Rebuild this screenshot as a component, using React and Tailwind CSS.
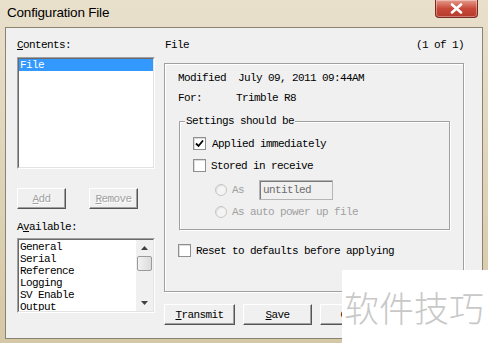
import React from "react";

const mono = "font-['Liberation_Mono',monospace] text-[11px] tracking-[-0.6px] leading-[12px]";

function Check({ checked }) {
  return (
    <span className="w-[13px] h-[13px] border border-[#8f8f8f] bg-white flex items-center justify-center shrink-0 shadow-[inset_1px_1px_0_#dcdcdc]">
      {checked && (
        <svg width="9" height="9" viewBox="0 0 9 9">
          <path d="M1 4.5 L3.5 7 L8 1.5" stroke="#000" strokeWidth="1.8" fill="none" />
        </svg>
      )}
    </span>
  );
}

function Radio() {
  return (
    <span className="w-[12px] h-[12px] rounded-full border border-[#c6c6c6] bg-[#f4f4f4] shrink-0 shadow-[inset_1px_1px_0_#e0e0e0]" />
  );
}

function Btn({ children, w, disabled }) {
  return (
    <div
      className={`${w} h-[21px] shrink-0 flex items-center justify-center border border-t-white border-l-white border-r-[#555] border-b-[#555] shadow-[inset_-1px_-1px_0_#a0a0a0] bg-[#f0f0f0] ${mono} ${disabled ? "text-[#a0a0a0] [text-shadow:1px_1px_0_#fff]" : "text-black"}`}
    >
      {children}
    </div>
  );
}

function Sunken({ className, children }) {
  return (
    <div className={`shrink-0 border border-t-[#a0a0a0] border-l-[#a0a0a0] border-r-white border-b-white ${className}`}>
      <div className="w-full h-full border border-t-[#696969] border-l-[#696969] border-r-[#e3e3e3] border-b-[#e3e3e3] bg-white overflow-hidden">
        {children}
      </div>
    </div>
  );
}

export default function App() {
  const available = ["General", "Serial", "Reference", "Logging", "SV Enable", "Output"];
  return (
    <div className="relative w-[488px] h-[343px] overflow-hidden bg-gradient-to-b from-[#e9e0cc] to-[#d5c8a6] flex flex-col">
      {/* Title bar */}
      <div className="h-[27px] shrink-0 flex items-start justify-between pl-[7px] pr-[10px]">
        <span className="mt-[3px] font-['Liberation_Sans',sans-serif] text-[13.5px] tracking-[-0.2px] text-black leading-[20px]">
          Configuration File
        </span>
        <div className="w-[43px] h-[18px] rounded-b-[4px] border border-t-0 border-[#7a2a20] bg-gradient-to-b from-[#e59a8c] via-[#c8493a] to-[#b53a2b] flex items-center justify-center shadow-[inset_0_0_0_1px_rgba(255,255,255,0.35)]">
          <svg width="13" height="11" viewBox="0 0 13 11">
            <path d="M2 1.5 L11 9.5 M11 1.5 L2 9.5" stroke="#fff" strokeWidth="2.6" strokeLinecap="round" />
          </svg>
        </div>
      </div>

      {/* Client */}
      <div className="ml-[5px] w-[478px] h-[312px] shrink-0 border border-[#8b8372] bg-[#f0f0f0] flex pl-[11px] pt-[11px]">
        {/* Left column */}
        <div className="w-[138px] flex flex-col">
          <div className={`${mono} h-[12px] shrink-0`}>
            <span className="underline">C</span>ontents:
          </div>
          <Sunken className="mt-[6px] w-[138px] h-[112px]">
            <div className={`${mono} bg-[#3399ff] text-white h-[12px] pl-[1px]`}>File</div>
          </Sunken>
          <div className="mt-[19px] flex gap-[23px] shrink-0">
            <Btn w="w-[49px]" disabled>
              <span className="underline">A</span>dd
            </Btn>
            <Btn w="w-[49px]" disabled>
              <span className="underline">R</span>emove
            </Btn>
          </div>
          <div className={`${mono} h-[12px] mt-[12px] shrink-0`}>
            A<span className="underline">v</span>ailable:
          </div>
          <Sunken className="mt-[5px] w-[138px] h-[75px]">
            <div className="flex h-full">
              <div className={`flex-1 ${mono} pt-[1px] pl-[1px]`}>
                {available.map((a) => (
                  <div key={a} className="h-[12px]">{a}</div>
                ))}
              </div>
              <div className="w-[17px] bg-[#f0f0f0] flex flex-col items-center">
                <svg width="7" height="4" viewBox="0 0 7 4" className="mt-[6px]">
                  <path d="M0 4 L3.5 0 L7 4 Z" fill="#404040" />
                </svg>
                <div className="mt-[6px] w-[15px] h-[15px] border border-[#9a9a9a] rounded-[2px] bg-gradient-to-r from-[#f2f2f2] to-[#dcdcdc]" />
                <div className="flex-1" />
                <svg width="7" height="4" viewBox="0 0 7 4" className="mb-[6px]">
                  <path d="M0 0 L7 0 L3.5 4 Z" fill="#404040" />
                </svg>
              </div>
            </div>
          </Sunken>
        </div>

        {/* Right column */}
        <div className="ml-[9px] w-[300px] flex flex-col">
          <div className={`${mono} h-[12px] shrink-0 flex justify-between pl-[1px]`}>
            <span>File</span>
            <span>(1 of 1)</span>
          </div>
          <div className="mt-[12px] h-[229px] shrink-0 border border-[#a0a0a0] shadow-[inset_1px_1px_0_#fff,1px_1px_0_#fff] flex flex-col pl-[13px]">
            <div className={`${mono} mt-[8px] h-[12px] shrink-0 whitespace-pre`}>Modified  July 09, 2011 09:44AM</div>
            <div className={`${mono} mt-[8px] h-[12px] shrink-0 flex`}>
              <span className="w-[58px]">For:</span>
              <span>Trimble R8</span>
            </div>
            {/* Settings group */}
            <div className="mt-[17px] ml-[1px] w-[271px] h-[109px] shrink-0 border border-[#a0a0a0] shadow-[inset_1px_1px_0_#fff,1px_1px_0_#fff] relative flex flex-col pl-[13px]">
              <span className={`${mono} absolute -top-[7px] left-[5px] bg-[#f0f0f0] px-[1px]`}>Settings should be</span>
              <div className="mt-[15px] flex items-center gap-[6px] h-[13px] shrink-0">
                <Check checked />
                <span className={mono}>Applied immediately</span>
              </div>
              <div className="mt-[9px] flex items-center gap-[5px] h-[13px] shrink-0">
                <Check />
                <span className={mono}>Stored in receive</span>
              </div>
              <div className="mt-[8px] ml-[22px] flex items-center h-[20px] shrink-0">
                <Radio />
                <span className={`${mono} text-[#a0a0a0] ml-[5px] w-[27px]`}>As</span>
                <div className="w-[74px] h-[20px] border border-[#b5b5b5] shadow-[inset_1px_1px_0_#7a7a7a] bg-[#f0f0f0] flex items-center pl-[3px]">
                  <span className={`${mono} text-[#6d6d6d]`}>untitled</span>
                </div>
              </div>
              <div className="mt-[5px] ml-[22px] flex items-center gap-[5px] h-[13px] shrink-0">
                <Radio />
                <span className={`${mono} text-[#a0a0a0]`}>As auto power up file</span>
              </div>
            </div>
            <div className="mt-[14px] flex items-center gap-[5px] h-[13px] shrink-0">
              <Check />
              <span className={mono}>Reset to defaults before applying</span>
            </div>
          </div>
          <div className="mt-[12px] flex gap-[8px] shrink-0">
            <Btn w="w-[71px]">
              <span className="underline">T</span>ransmit
            </Btn>
            <Btn w="w-[69px]">
              <span className="underline">S</span>ave
            </Btn>
            <Btn w="w-[71px]">Close</Btn>
          </div>
        </div>
      </div>

      {/* Watermark overlay */}
      <div className="absolute left-[342px] top-[270px] w-[146px] h-[73px] bg-white flex items-center pl-[2px]">
        <span className="font-['Noto_Sans_CJK_SC',sans-serif] text-[35px] font-light text-[#c8c8c8] leading-none">软件技巧</span>
      </div>
    </div>
  );
}
